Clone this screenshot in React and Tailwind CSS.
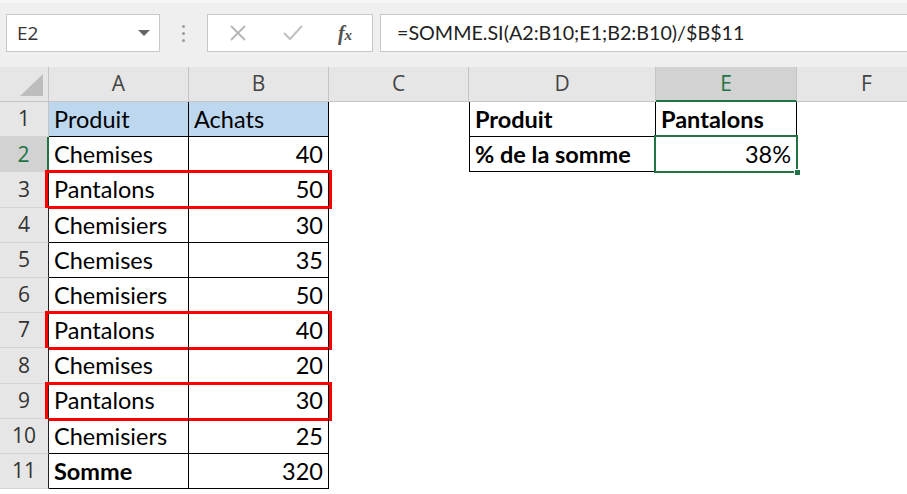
import React from "react";

const cols = [
  { key: "A", w: "w-[140px]" },
  { key: "B", w: "w-[140px]" },
  { key: "C", w: "w-[140px]" },
  { key: "D", w: "w-[187px]" },
  { key: "E", w: "w-[141px]" },
  { key: "F", w: "w-[140px]" },
];

const data = [
  ["Chemises", 40],
  ["Pantalons", 50],
  ["Chemisiers", 30],
  ["Chemises", 35],
  ["Chemisiers", 50],
  ["Pantalons", 40],
  ["Chemises", 20],
  ["Pantalons", 30],
  ["Chemisiers", 25],
];

const cellFont = { fontFamily: "Lato, 'Liberation Sans', sans-serif" };

function getCell(col, row) {
  if (col === "A" || col === "B") {
    const border = "border-r border-b border-black";
    if (row === 1) {
      return { text: col === "A" ? "Produit" : "Achats", cls: `${border} bg-[#bdd7ee]` };
    }
    if (row === 11) {
      return col === "A"
        ? { text: "Somme", cls: `${border} font-bold` }
        : { text: "320", cls: `${border} justify-end` };
    }
    const [name, qty] = data[row - 2];
    return col === "A"
      ? { text: name, cls: border }
      : { text: String(qty), cls: `${border} justify-end` };
  }
  if (col === "D" && row <= 2) {
    return {
      text: row === 1 ? "Produit" : "% de la somme",
      cls: "border-l border-r border-b border-black font-bold",
    };
  }
  if (col === "E" && row === 1) {
    return { text: "Pantalons", cls: "border-r border-b border-black font-bold" };
  }
  if (col === "E" && row === 2) {
    return { text: "38%", cls: "border-r border-b border-black justify-end", selected: true };
  }
  return { text: "", cls: "" };
}

function FormulaBar() {
  return (
    <div className="h-[67px] bg-[#efefef] border-t-[3px] border-[#f7f7f7] flex items-start pt-[11px] pl-[6px]">
      <div className="w-[154px] h-[38px] bg-white border border-[#c8c8c8] flex items-center justify-between pl-[10px] pr-[9px]">
        <span className="text-[19px] text-[#333]" style={{ fontFamily: "'Open Sans', sans-serif" }}>E2</span>
        <svg width="12" height="7" viewBox="0 0 12 7">
          <path d="M0 0 L12 0 L6 6 Z" fill="#666" />
        </svg>
      </div>
      <div className="w-[47px] h-[38px] flex flex-col items-center justify-center gap-[4px]">
        <span className="w-[3px] h-[3px] rounded-full bg-[#9a9a9a]" />
        <span className="w-[3px] h-[3px] rounded-full bg-[#9a9a9a]" />
        <span className="w-[3px] h-[3px] rounded-full bg-[#9a9a9a]" />
      </div>
      <div className="w-[166px] h-[38px] bg-white border border-[#c8c8c8] flex items-center">
        <div className="w-[58px] flex justify-center pl-[1px]">
          <svg width="18" height="18" viewBox="0 0 18 18">
            <path d="M2 2 L16 16 M16 2 L2 16" stroke="#b5b5b5" strokeWidth="1.8" />
          </svg>
        </div>
        <div className="w-[54px] flex justify-center">
          <svg width="22" height="18" viewBox="0 0 22 18">
            <path d="M2 9 L8 15 L20 2" stroke="#c0c0c0" strokeWidth="2" fill="none" />
          </svg>
        </div>
        <div className="flex-1 flex justify-center pr-[2px]">
          <span className="text-[20px] italic font-bold text-[#505050]" style={{ fontFamily: "'Liberation Serif', serif" }}>
            f<span className="text-[15px]">x</span>
          </span>
        </div>
      </div>
      <div className="ml-[7px] flex-1 h-[38px] bg-white border border-[#c8c8c8] border-r-0 flex items-center pl-[16px]">
        <span className="text-[19.7px] text-[#222]" style={cellFont}>=SOMME.SI(A2:B10;E1;B2:B10)/$B$11</span>
      </div>
    </div>
  );
}

function HeaderRow() {
  return (
    <div className="flex h-[35px] bg-[#e6e6e6]">
      <div className="w-[49px] shrink-0 border-r border-b border-[#c4c4c4] flex items-end justify-end pb-[5px] pr-[5px]">
        <svg width="23" height="22" viewBox="0 0 23 22">
          <path d="M23 0 L23 22 L0 22 Z" fill="#bdbdbd" />
        </svg>
      </div>
      {cols.map((c) => (
        <div
          key={c.key}
          className={
            c.key === "E"
              ? `${c.w} shrink-0 bg-[#d2d2d2] border-r border-[#c4c4c4] border-b-2 border-b-[#217346] flex items-center justify-center text-[21px] text-[#217346]`
              : `${c.w} shrink-0 border-r border-b border-[#c4c4c4] flex items-center justify-center text-[21px] text-[#444]`
          }
          style={{ fontFamily: "'Open Sans', sans-serif" }}
        >
          {c.key}
        </div>
      ))}
    </div>
  );
}

function RowHeader({ row }) {
  let cls = "w-[49px] shrink-0 border-b border-[#d4d4d4] flex items-center justify-center text-[21px] ";
  if (row === 1) cls += "bg-[#e6e6e6] border-r border-r-[#c4c4c4] text-[#333]";
  else if (row === 2) cls += "bg-[#d2d2d2] border-r-2 border-r-[#217346] text-[#217346]";
  else cls += "bg-[#e6e6e6] border-r border-r-[#222] text-[#333]";
  return (
    <div className={cls} style={{ fontFamily: "'Open Sans', sans-serif" }}>
      {row}
    </div>
  );
}

function Row({ row }) {
  const highlighted = row === 3 || row === 7 || row === 9;
  return (
    <div className="relative flex h-[35.2px]">
      <RowHeader row={row} />
      {cols.map((c) => {
        const cell = getCell(c.key, row);
        return (
          <div
            key={c.key}
            className={`${c.w} shrink-0 relative flex items-center pl-[5px] pr-[5px] pt-[1px] text-[23.5px] text-black ${cell.cls}`}
            style={cellFont}
          >
            {cell.text}
            {cell.selected && (
              <div className="absolute -left-[2px] -top-[2px] -right-[2px] -bottom-[2px] border-2 border-[#217346]">
                <div className="absolute -right-[5px] -bottom-[5px] w-[7px] h-[7px] bg-[#217346] border border-white" />
              </div>
            )}
          </div>
        );
      })}
      {highlighted && (
        <div className="absolute left-[45px] top-[-2px] w-[287px] h-[39px] border-[3px] border-[#ff0000]" />
      )}
    </div>
  );
}

export default function App() {
  return (
    <div className="w-[907px] h-[494px] overflow-hidden bg-white">
      <FormulaBar />
      <div className="w-[1200px]">
        <HeaderRow />
        {Array.from({ length: 11 }, (_, i) => (
          <Row key={i + 1} row={i + 1} />
        ))}
      </div>
    </div>
  );
}
